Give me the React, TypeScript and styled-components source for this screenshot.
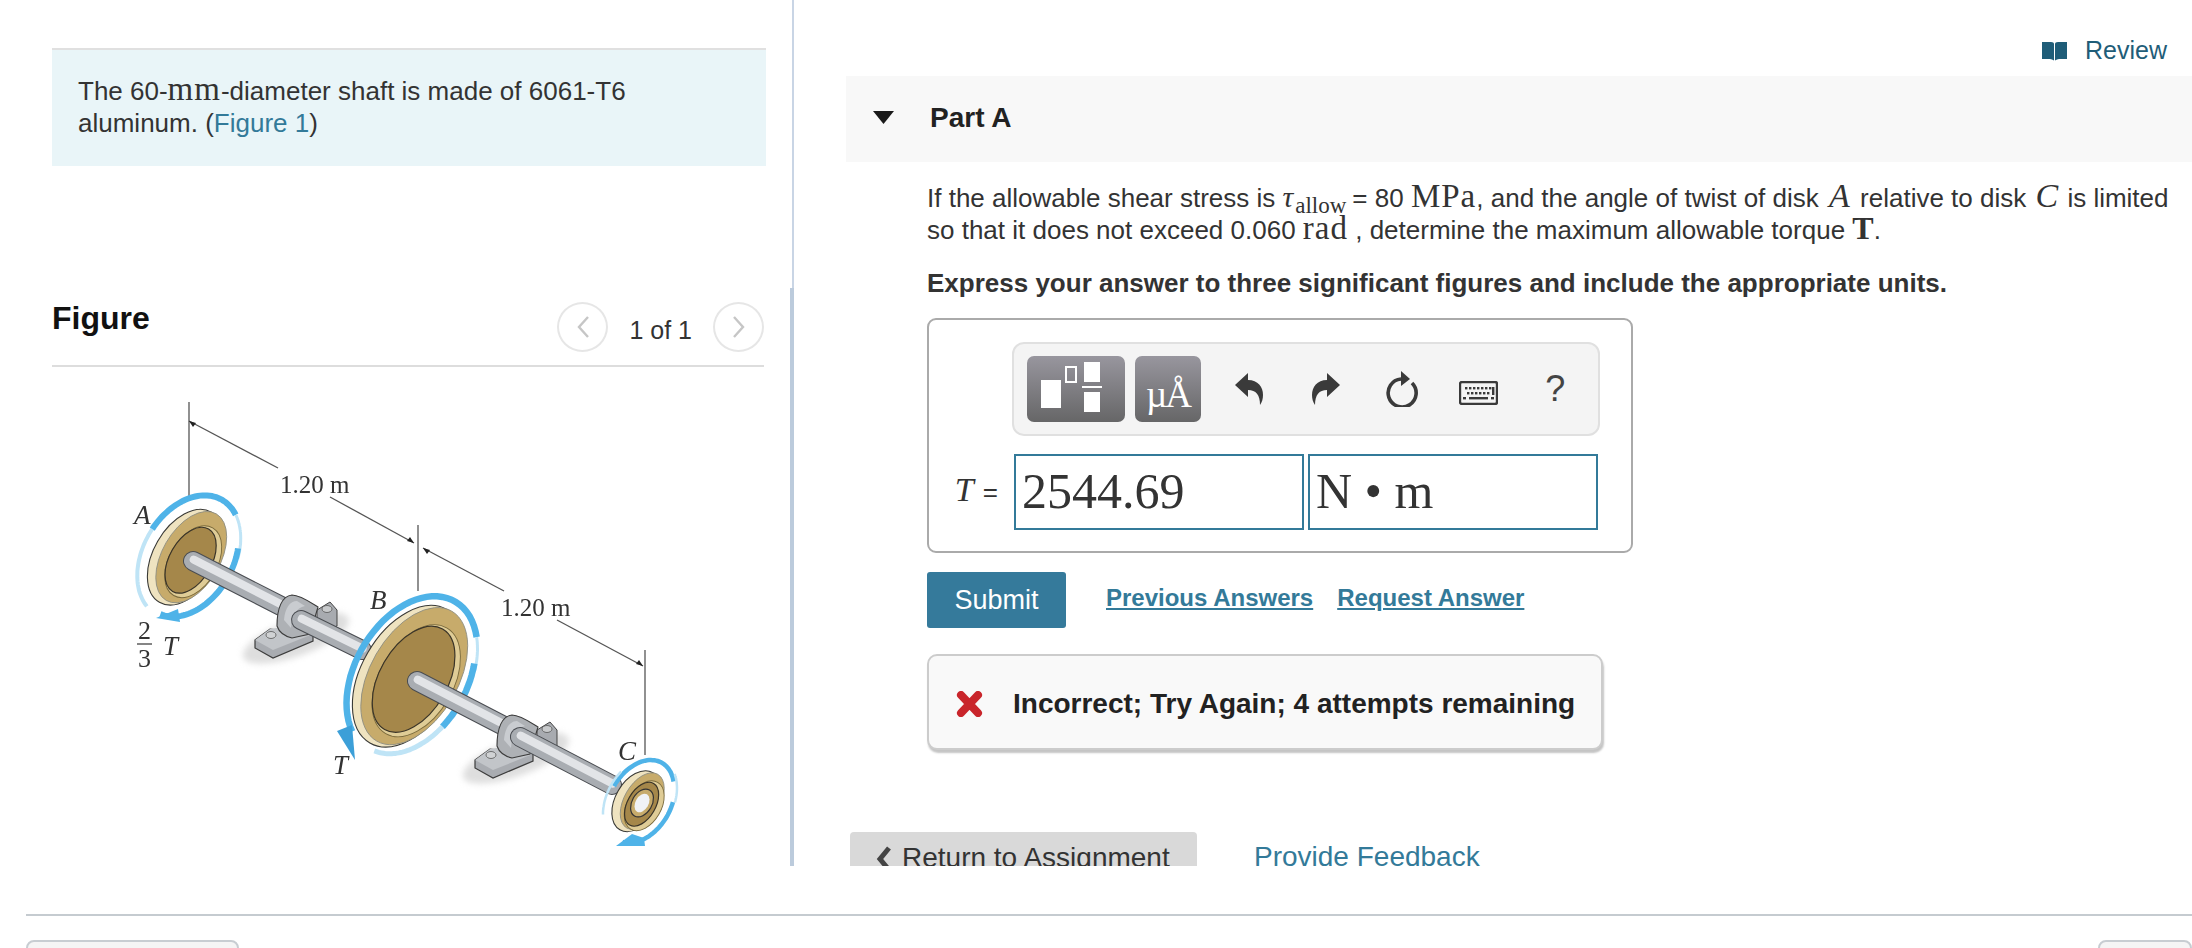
import React from "react";
import styled, { createGlobalStyle } from "styled-components";

const Global = createGlobalStyle`
  html, body { margin: 0; padding: 0; background: #fff; }
  body { font-family: "Liberation Sans", Arial, sans-serif; color: #333; overflow: hidden; }
`;

const Page = styled.div`
  width: 2192px;
  height: 948px;
  overflow: hidden;
  display: flex;
  flex-direction: column;
`;
const Main = styled.div`
  height: 866px;
  flex: none;
  display: flex;
  overflow: hidden;
`;
const LeftCol = styled.section`
  position: relative;
  width: 794px;
  flex: none;
  box-sizing: border-box;
  padding: 48px 22px 0 52px;
  border-right: 2px solid #c9d5e5;
`;
const ScrollThumb = styled.div`
  position: absolute;
  right: -2px;
  top: 288px;
  bottom: 0;
  width: 4px;
  background: #bccbdc;
`;
const Intro = styled.div`
  height: 118px;
  width: 714px;
  box-sizing: border-box;
  background: #e9f5f8;
  border-top: 2px solid #e0e0e0;
  padding: 25px 26px 0;
  font-size: 26px;
  line-height: 32px;
`;
const Link = styled.a`
  color: #337a99;
  text-decoration: none;
`;
const FigureHeader = styled.div`
  margin-top: 136px;
  height: 63px;
  width: 712px;
  border-bottom: 2px solid #ddd;
  display: flex;
  align-items: flex-start;
`;
const FigureTitle = styled.h2`
  margin: 0;
  font-size: 32px;
  line-height: 32px;
  font-weight: 700;
  color: #111;
  flex: 1;
`;
const Pager = styled.div`
  display: flex;
  align-items: center;
  gap: 21px;
  height: 50px;
`;
const PageLabel = styled.span`
  font-size: 25px;
  position: relative;
  top: 3px;
`;
const RoundBtn = styled.span`
  width: 47px;
  height: 46px;
  border: 2px solid #e6e6e6;
  border-radius: 50%;
  display: flex;
  align-items: center;
  justify-content: center;
`;
const FigureArt = styled.svg`
  display: block;
  margin: 21px 0 0 48px;
  filter: blur(0.6px);
`;

const RightCol = styled.section`
  flex: 1;
  min-width: 0;
  padding: 0 0 0 52px;
  display: flex;
  flex-direction: column;
`;
const ReviewRow = styled.div`
  height: 76px;
  flex: none;
  display: flex;
  justify-content: flex-end;
  align-items: flex-start;
  padding: 36px 25px 0 0;
  box-sizing: border-box;
  gap: 18px;
  color: #1f5d78;
  font-size: 25px;
  line-height: 29px;
`;
const ReviewIconSlot = styled.span`
  margin-top: 5px;
  display: flex;
`;
const PartBand = styled.div`
  height: 86px;
  background: #f8f8f8;
  display: flex;
  align-items: center;
  padding: 0 0 3px 27px;
  box-sizing: border-box;
  flex: none;
`;
const PartTitle = styled.h3`
  margin: 0 0 0 36px;
  font-size: 28px;
  font-weight: 700;
  color: #222;
`;
const Body = styled.div`
  padding: 20px 0 0 81px;
`;
const Question = styled.p`
  margin: 0;
  width: 1262px;
  font-size: 26px;
  line-height: 32px;
  white-space: nowrap;
`;
const MathText = styled.span<{ $italic?: boolean; $bold?: boolean; $size?: number; $spaced?: boolean; $side?: number }>`
  font-family: "Liberation Serif", "Times New Roman", serif;
  font-style: ${(p) => (p.$italic ? "italic" : "normal")};
  font-weight: ${(p) => (p.$bold ? 700 : 400)};
  font-size: ${(p) => p.$size ?? 30}px;
  letter-spacing: ${(p) => (p.$spaced ? "1px" : "0")};
  margin: 0 ${(p) => p.$side ?? 0}px;
  line-height: 0;
`;
const Sub = styled.sub`
  font-family: "Liberation Serif", "Times New Roman", serif;
  font-size: 23px;
  line-height: 0;
  vertical-align: -6px;
  margin: 0 6px 0 2px;
`;
const Instruction = styled.p`
  margin: 21px 0 0;
  font-size: 26px;
  font-weight: 700;
  line-height: 32px;
`;
const AnswerBox = styled.div`
  margin-top: 19px;
  width: 706px;
  height: 235px;
  box-sizing: border-box;
  border: 2px solid #aaa;
  border-radius: 9px;
  padding: 22px 0 0 83px;
`;
const Toolbar = styled.div`
  width: 588px;
  height: 94px;
  box-sizing: border-box;
  border: 2px solid #e0e0e0;
  border-radius: 12px;
  background: #f4f4f4;
  display: flex;
  align-items: center;
  padding-left: 13px;
`;
const ToolBtn = styled.span<{ $w: number }>`
  width: ${(p) => p.$w}px;
  height: 66px;
  margin-right: 10px;
  border-radius: 7px;
  background: linear-gradient(#98969e, #666667);
  display: flex;
  align-items: center;
  justify-content: center;
  flex: none;
`;
const UnitGlyph = styled.span`
  font-family: "Liberation Serif", "Times New Roman", serif;
  font-size: 37px;
  letter-spacing: -2px;
  color: #fff;
  position: relative;
  top: 5px;
`;
const IconCell = styled.span<{ $drop?: number }>`
  width: 76.5px;
  display: flex;
  align-items: center;
  justify-content: center;
  flex: none;
  color: #3a3a3a;
  margin-top: ${(p) => p.$drop ?? 0}px;
`;
const Toolset = styled.div`
  display: flex;
  align-items: center;
`;
const HelpGlyph = styled.span`
  font-size: 36px;
  color: #444;
`;
const InputRow = styled.div`
  display: flex;
  align-items: center;
  margin: 18px 0 0 -83px;
  gap: 4px;
`;
const VarLabel = styled.span`
  width: 81px;
  box-sizing: border-box;
  padding-right: 12px;
  text-align: right;
  font-size: 26px;
  white-space: nowrap;
`;
const AnswerInput = styled.div`
  width: 290px;
  height: 76px;
  box-sizing: border-box;
  border: 2px solid #337a99;
  padding-left: 6px;
  font-family: "Liberation Serif", "Times New Roman", serif;
  font-size: 50px;
  line-height: 70px;
  color: #333;
  white-space: nowrap;
`;
const ActionRow = styled.div`
  margin-top: 19px;
  display: flex;
  align-items: flex-start;
`;
const SubmitBtn = styled.span`
  width: 139px;
  height: 56px;
  border-radius: 3px;
  background: #357a9b;
  color: #fff;
  font-size: 27px;
  display: flex;
  align-items: center;
  justify-content: center;
`;
const ActionLink = styled.a<{ $gap: number }>`
  margin: 11px 0 0 ${(p) => p.$gap}px;
  font-size: 24px;
  line-height: 30px;
  font-weight: 700;
  color: #337a99;
  text-decoration: underline;
`;
const Feedback = styled.div`
  margin-top: 26px;
  width: 676px;
  height: 96px;
  box-sizing: border-box;
  background: #f9f9f9;
  border: 2px solid #ccc;
  border-radius: 10px;
  box-shadow: 1px 3px 2px #c4c4c4;
  display: flex;
  align-items: center;
  padding: 4px 0 0 27px;
  gap: 30px;
  font-size: 28px;
  font-weight: 700;
  color: #222;
  white-space: nowrap;
`;
const BottomNav = styled.div`
  margin: 82px 0 0 -77px;
  display: flex;
  align-items: flex-start;
`;
const ReturnBtn = styled.span`
  width: 347px;
  height: 60px;
  box-sizing: border-box;
  background: #d9d9d9;
  border-radius: 4px 4px 0 0;
  padding: 10px 0 0 26px;
  display: flex;
  align-items: flex-start;
  gap: 11px;
  font-size: 28px;
  line-height: 32px;
`;
const FeedbackLink = styled.a`
  margin: 9px 0 0 57px;
  font-size: 28px;
  line-height: 32px;
  color: #337a99;
`;
const Footer = styled.footer`
  flex: none;
  padding: 48px 0 0 26px;
`;
const FooterRule = styled.div`
  height: 2px;
  background: #c5cbd0;
`;
const FooterRow = styled.div`
  margin-top: 24px;
  display: flex;
  justify-content: space-between;
`;
const FooterBtn = styled.span<{ $w: number }>`
  width: ${(p) => p.$w}px;
  height: 40px;
  box-sizing: border-box;
  background: #f5f5f5;
  border: 2px solid #c8cdd2;
  border-radius: 8px;
`;

function arc(rx: number, ry: number, from: number, to: number) {
  const n = 40;
  const pts: string[] = [];
  for (let i = 0; i <= n; i++) {
    const t = ((from + ((to - from) * i) / n) * Math.PI) / 180;
    pts.push(`${(rx * Math.sin(t)).toFixed(1)} ${(-ry * Math.cos(t)).toFixed(1)}`);
  }
  return "M" + pts.join(" L");
}

const BLUE = "#4fb3e8";
const PALE = "#bfe4f6";

function Disc({ cx, cy, a, b, ia, ib }: { cx: number; cy: number; a: number; b: number; ia: number; ib: number }) {
  return (
    <g transform={`translate(${cx} ${cy}) rotate(30)`}>
      <ellipse cx={-3} cy={2} rx={b} ry={a} fill="#efe3c0" stroke="#3a3a36" strokeWidth="1.1" />
      <ellipse cx={2} cy={-1} rx={b - 3} ry={a - 2} fill="#c7ab6b" stroke="#8c8c80" strokeWidth="0.8" />
      <ellipse cx={6} cy={2} rx={ib + 3} ry={ia + 3} fill="#dfcc96" stroke="#7a6a3c" strokeWidth="0.9" />
      <ellipse cx={3} cy={2} rx={ib} ry={ia} fill="#a5874a" stroke="#3a3428" strokeWidth="1.2" />
    </g>
  );
}

function Bearing({ dx, dy }: { dx: number; dy: number }) {
  return (
    <g transform={`translate(${dx} ${dy})`}>
      <ellipse cx={296} cy={640} rx={56} ry={18} transform="rotate(-20 296 640)" fill="#dedede" filter="url(#soft)" />
      <path d="M317 612 L330 604 L337 612 L337 628 L317 636 Z" fill="#a8abb0" stroke="#444" strokeWidth="1" />
      <ellipse cx={327} cy={611} rx={5} ry={3.5} fill="#c8cacc" stroke="#555" strokeWidth="0.8" />
      <path d="M255 642 L270 631 L313 636 L313 643 L273 660 L255 650 Z" fill="#a9acb1" stroke="#3c3c3c" strokeWidth="1.2" />
      <path d="M255 642 L273 652 L313 636 L290 628 L270 631 Z" fill="#c2c5c9" />
      <ellipse cx={271} cy={637} rx={5} ry={3.5} fill="#d0d2d4" stroke="#555" strokeWidth="0.8" />
      <path d="M277 628 C277 610 282 598 292 597 C300 597 310 604 318 609 L310 636 L292 640 C284 638 279 634 277 628 Z" fill="#aeb1b5" stroke="#3c3c3c" strokeWidth="1.1" />
      <path d="M284 622 C285 610 290 603 297 603 L305 608 C296 610 292 618 291 630 Z" fill="#c9ccd0" />
    </g>
  );
}

function ShaftPiece({ x1, y1, x2, y2 }: { x1: number; y1: number; x2: number; y2: number }) {
  const len = Math.hypot(x2 - x1, y2 - y1);
  const nx = -(y2 - y1) / len;
  const ny = (x2 - x1) / len;
  return (
    <g strokeLinecap="round">
      <line x1={x1} y1={y1} x2={x2} y2={y2} stroke="#4a4d52" strokeWidth="20" />
      <line x1={x1} y1={y1} x2={x2} y2={y2} stroke="#a9adb2" strokeWidth="18" />
      <line x1={x1 - nx * 1.5} y1={y1 - ny * 1.5} x2={x2 - nx * 1.5} y2={y2 - ny * 1.5} stroke="#e2e4e7" strokeWidth="8" />
    </g>
  );
}

function Illustration() {
  const label = { fontFamily: "'Liberation Serif', serif", fill: "#333" } as const;
  return (
    <FigureArt width="600" height="458" viewBox="100 390 600 458">
      <defs>
        <filter id="soft" x="-20%" y="-40%" width="140%" height="180%">
          <feGaussianBlur stdDeviation="3" />
        </filter>
      </defs>
      <g stroke="#555" strokeWidth="1.3" fill="none">
        <path d="M189 404 V498" />
        <path d="M189 423 L278 470" />
        <path d="M330 499 L414 545" />
        <path d="M418 527 V593" />
        <path d="M423 550 L504 593" />
        <path d="M557 622 L643 668" />
        <path d="M645 652 V757" />
      </g>
      <g fill="#222">
        <path d="M189 423 l7 2 l-3 4 Z" />
        <path d="M414 545 l-7 -2 l3 -4 Z" />
        <path d="M423 550 l7 2 l-3 4 Z" />
        <path d="M643 668 l-7 -2 l3 -4 Z" />
      </g>

      <g transform="translate(189 559) rotate(30)" fill="none">
        <path d={arc(46, 66, 195, 275)} stroke={PALE} strokeWidth="4" />
        <path d={arc(46, 66, 275, 385)} stroke={BLUE} strokeWidth="6" />
        <path d={arc(46, 66, 25, 70)} stroke={PALE} strokeWidth="3" />
      </g>
      <Disc cx={189} cy={559} a={52} b={32} ia={36} ib={21} />
      <g transform="translate(189 559) rotate(30)" fill="none">
        <path d={arc(44, 64, 60, 175)} stroke={BLUE} strokeWidth="6" />
      </g>
      <path d="M156 620 L178 611 L180 624 Z" fill={BLUE} />

      <ShaftPiece x1={193} y1={563} x2={281} y2={608} />
      <Bearing dx={0} dy={0} />
      <ShaftPiece x1={301} y1={622} x2={362} y2={652} />

      <g transform="translate(412 678) rotate(30)" fill="none">
        <path d={arc(57, 86, 205, 400)} stroke={BLUE} strokeWidth="6.5" />
        <path d={arc(57, 86, 40, 65)} stroke={PALE} strokeWidth="3" />
      </g>
      <Disc cx={412} cy={678} a={77} b={47} ia={58} ib={34} />
      <g transform="translate(412 678) rotate(30)" fill="none">
        <path d={arc(55, 84, 60, 110)} stroke={BLUE} strokeWidth="6.5" />
        <path d={arc(55, 84, 110, 175)} stroke={PALE} strokeWidth="5" />
      </g>
      <path d="M337 733 L352 727 L355 762 Z" fill="#3c9fd8" />

      <ShaftPiece x1={417} y1={683} x2={502} y2={727} />
      <Bearing dx={220} dy={120} />
      <ShaftPiece x1={520} y1={739} x2={612} y2={787} />

      <g transform="translate(640 803) rotate(30)" fill="none">
        <path d={arc(30, 44, 270, 400)} stroke={BLUE} strokeWidth="4.5" />
        <path d={arc(33, 47, 30, 70)} stroke={PALE} strokeWidth="2.5" />
        <path d={arc(33, 47, 230, 290)} stroke={PALE} strokeWidth="2.5" />
      </g>
      <Disc cx={640} cy={803} a={33} b={21} ia={24} ib={14} />
      <g transform="translate(642 805) rotate(30)">
        <ellipse rx={10} ry={15} fill="#c7ab6b" stroke="#333" strokeWidth="1.2" />
        <ellipse rx={6.5} ry={10} fill="#f0f2f5" />
      </g>
      <g transform="translate(640 803) rotate(30)" fill="none">
        <path d={arc(31, 45, 70, 170)} stroke={BLUE} strokeWidth="4.5" />
      </g>
      <path d="M616 848 L632 836 L644 840 L645 848 Z" fill={BLUE} />

      <g style={label}>
        <text x="280" y="495" fontSize="25">1.20 m</text>
        <text x="501" y="618" fontSize="25">1.20 m</text>
        <g fontStyle="italic" fontSize="27">
          <text x="134" y="526">A</text>
          <text x="370" y="611">B</text>
          <text x="618" y="762">C</text>
          <text x="333" y="776">T</text>
          <text x="163" y="657">T</text>
        </g>
        <text x="138" y="641" fontSize="26">2</text>
        <text x="138" y="669" fontSize="26">3</text>
      </g>
      <line x1="137" y1="646" x2="152" y2="646" stroke="#333" strokeWidth="1.2" />
    </FigureArt>
  );
}

function Chevron({ left }: { left?: boolean }) {
  return (
    <svg width="14" height="24" viewBox="0 0 14 24" fill="none" stroke="#c6c6c6" strokeWidth="2.4">
      <path d={left ? "M12 2 L3 12 L12 22" : "M2 2 L11 12 L2 22"} />
    </svg>
  );
}

function BookIcon() {
  return (
    <svg width="25" height="20" viewBox="0 0 25 20" fill="#1f5d78">
      <path d="M0 1 H9 Q12 1 12 3 V19.5 Q10 18 8 18 H0 Z" />
      <path d="M25 1 H16 Q13 1 13 3 V19.5 Q15 18 17 18 H25 Z" />
    </svg>
  );
}

function TemplateIcon() {
  return (
    <svg width="98" height="66" viewBox="0 0 98 66">
      <rect x="14" y="24" width="20" height="28" fill="#fff" />
      <rect x="39" y="11" width="10" height="15" fill="none" stroke="#fff" strokeWidth="2" />
      <rect x="57" y="6" width="16" height="20" fill="#fff" />
      <rect x="55" y="30" width="20" height="2" fill="#fff" />
      <rect x="57" y="36" width="16" height="20" fill="#fff" />
    </svg>
  );
}

function ReplyIcon({ flip }: { flip?: boolean }) {
  return (
    <svg width="28" height="32" viewBox="0 0 28 32" fill="#3a3a3a" style={flip ? { transform: "scaleX(-1)" } : undefined}>
      <path d="M0 12 L13 0 V7 C23 7 28 14 28 22 C28 26 27 29 25 32 C25 22 21 17 13 17 V24 Z" />
    </svg>
  );
}

function ResetIcon() {
  return (
    <svg width="32" height="36" viewBox="0 0 32 36" fill="none">
      <path d="M15 8 A14 14 0 1 0 26 12" stroke="#3a3a3a" strokeWidth="3.6" />
      <path d="M15 0 L24 8 L15 15 Z" fill="#3a3a3a" />
    </svg>
  );
}

function KeyboardIcon() {
  const keys: React.ReactNode[] = [];
  for (let i = 0; i < 7; i++) keys.push(<rect key={"a" + i} x={6 + i * 4} y={6} width="2.4" height="2.4" />);
  for (let i = 0; i < 6; i++) keys.push(<rect key={"b" + i} x={8 + i * 4} y={11} width="2.4" height="2.4" />);
  return (
    <svg width="39" height="24" viewBox="0 0 39 24" fill="#3a3a3a">
      <rect x="1" y="1" width="37" height="22" rx="2" fill="#f4f4f4" stroke="#3a3a3a" strokeWidth="2.4" />
      {keys}
      <rect x="4" y="16" width="3" height="2.4" />
      <rect x="10" y="16" width="19" height="2.4" />
      <rect x="32" y="16" width="3" height="2.4" />
      <rect x="33" y="6" width="2.4" height="8" />
    </svg>
  );
}

function CrossIcon() {
  return (
    <svg width="27" height="26" viewBox="0 0 27 26" stroke="#c9252b" strokeWidth="8" strokeLinecap="round">
      <path d="M5 4 L22 22 M22 4 L5 22" />
    </svg>
  );
}

function BackChevron() {
  return (
    <svg width="15" height="26" viewBox="0 0 15 26" fill="none" stroke="#444" strokeWidth="5" style={{ marginTop: 4 }}>
      <path d="M13 2 L4 13 L13 24" />
    </svg>
  );
}

export default function App() {
  return (
    <Page>
      <Global />
      <Main>
        <LeftCol>
          <ScrollThumb />
          <Intro>
            The 60-<MathText $spaced $size={33}>mm</MathText>-diameter shaft is made of 6061-T6
            <br />
            aluminum. (<Link>Figure 1</Link>)
          </Intro>
          <FigureHeader>
            <FigureTitle>Figure</FigureTitle>
            <Pager>
              <RoundBtn><Chevron left /></RoundBtn>
              <PageLabel>1 of 1</PageLabel>
              <RoundBtn><Chevron /></RoundBtn>
            </Pager>
          </FigureHeader>
          <Illustration />
        </LeftCol>
        <RightCol>
          <ReviewRow>
            <ReviewIconSlot><BookIcon /></ReviewIconSlot>
            <span>Review</span>
          </ReviewRow>
          <PartBand>
            <svg width="21" height="13" viewBox="0 0 21 13" fill="#1a1a1a">
              <path d="M0 0 H21 L10.5 13 Z" />
            </svg>
            <PartTitle>Part A</PartTitle>
          </PartBand>
          <Body>
            <Question>
              If the allowable shear stress is <MathText $italic>τ</MathText>
              <Sub>allow</Sub>= 80 <MathText $spaced $size={33}>MPa</MathText>, and the angle of twist of disk{" "}
              <MathText $italic $size={34} $side={3}>A</MathText> relative to disk{" "}
              <MathText $italic $size={34} $side={2}>C</MathText> is limited
              <br />
              so that it does not exceed 0.060 <MathText $spaced $size={33}>rad</MathText> , determine the maximum allowable torque{" "}
              <MathText $bold $size={32}>T</MathText>.
            </Question>
            <Instruction>Express your answer to three significant figures and include the appropriate units.</Instruction>
            <AnswerBox>
              <Toolbar>
                <ToolBtn $w={98}><TemplateIcon /></ToolBtn>
                <ToolBtn $w={66}><UnitGlyph>µÅ</UnitGlyph></ToolBtn>
                <Toolset>
                  <IconCell><ReplyIcon /></IconCell>
                  <IconCell><ReplyIcon flip /></IconCell>
                  <IconCell><ResetIcon /></IconCell>
                  <IconCell $drop={8}><KeyboardIcon /></IconCell>
                  <IconCell><HelpGlyph>?</HelpGlyph></IconCell>
                </Toolset>
              </Toolbar>
              <InputRow>
                <VarLabel><MathText $italic $size={34} $side={2}>T</MathText> =</VarLabel>
                <AnswerInput>2544.69</AnswerInput>
                <AnswerInput>N • m</AnswerInput>
              </InputRow>
            </AnswerBox>
            <ActionRow>
              <SubmitBtn>Submit</SubmitBtn>
              <ActionLink $gap={40}>Previous Answers</ActionLink>
              <ActionLink $gap={24}>Request Answer</ActionLink>
            </ActionRow>
            <Feedback>
              <CrossIcon />
              <span>Incorrect; Try Again; 4 attempts remaining</span>
            </Feedback>
            <BottomNav>
              <ReturnBtn><BackChevron />Return to Assignment</ReturnBtn>
              <FeedbackLink>Provide Feedback</FeedbackLink>
            </BottomNav>
          </Body>
        </RightCol>
      </Main>
      <Footer>
        <FooterRule />
        <FooterRow>
          <FooterBtn $w={213} />
          <FooterBtn $w={94} />
        </FooterRow>
      </Footer>
    </Page>
  );
}
